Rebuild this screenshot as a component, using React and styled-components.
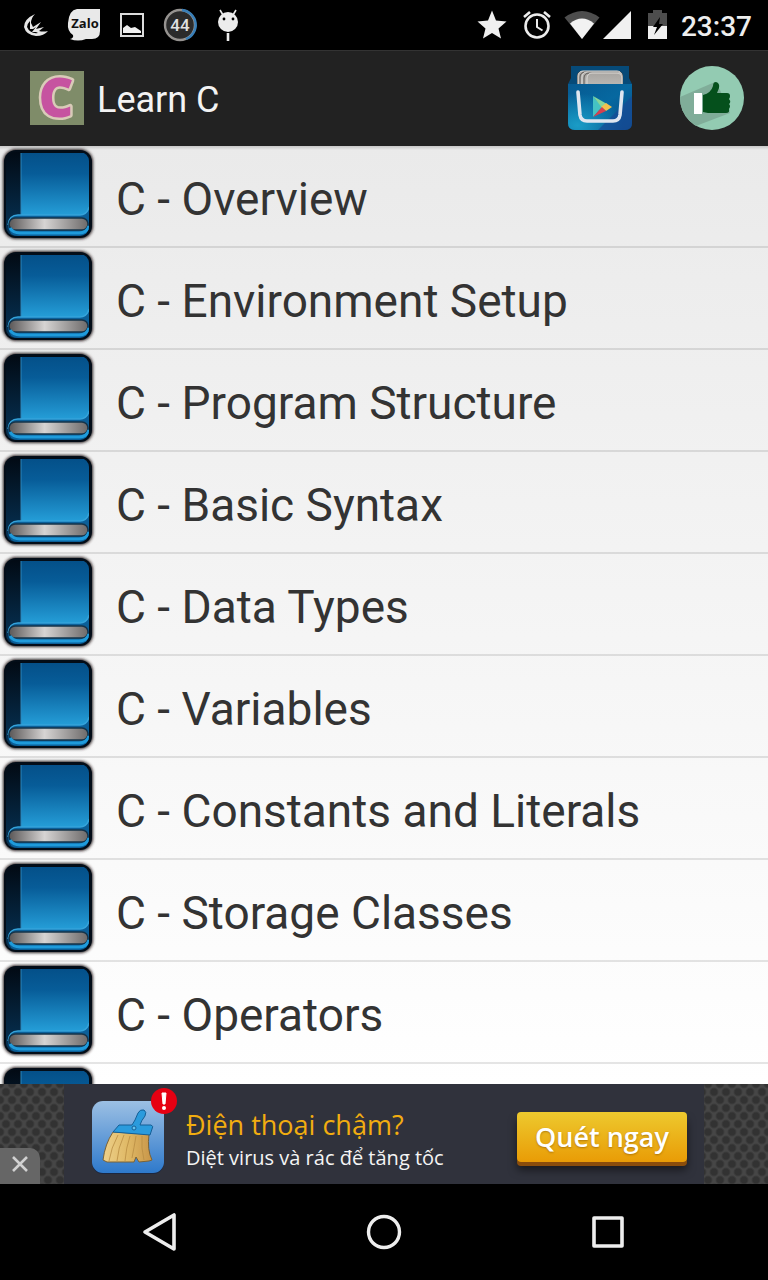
import React from 'react';
import styled, { createGlobalStyle } from 'styled-components';

const chapters = [
  'Overview',
  'Environment Setup',
  'Program Structure',
  'Basic Syntax',
  'Data Types',
  'Variables',
  'Constants and Literals',
  'Storage Classes',
  'Operators',
];

export default function App() {
  return (
    <React.Fragment>
      <GlobalStyle />
      <Screen>
        <StatusBar />
        <AppBar>
          <LogoIcon />
          <Title>Learn C</Title>
          <Action type="button" aria-label="More apps">
            <StoreIcon />
          </Action>
          <Action type="button" aria-label="Rate">
            <ThumbIcon />
          </Action>
        </AppBar>
        <ListArea>
          <BookDefs />
          <List>
            {chapters.map((name) => (
              <Row key={name}>
                <RowLink href="#">
                  <BookIcon />
                  <RowText>C - {name}</RowText>
                </RowLink>
              </Row>
            ))}
            {/* next chapter, only its book peeks out above the banner */}
            <Row>
              <RowLink href="#" aria-label="C - Decision Making">
                <BookIcon />
              </RowLink>
            </Row>
          </List>
        </ListArea>
        <AdBanner />
        <NavBar />
      </Screen>
    </React.Fragment>
  );
}

function StatusBar() {
  return (
    <Status>
      <Notification>
        <svg width="48" height="50" viewBox="0 0 48 50">
          <path
            d="M23 14Q12 19 12 27Q14 35 24 36Q32 36 36 31Q31 32 27 31L32 27L24 29L29 22L21 27L19 23Q19 18 23 14Z"
            fill="#e6e6e6"
          />
          <path d="M18 21L18 29L21 29L24 27L20 32L24 32L26 33Q18 34 15 27Q15 24 18 21Z" fill="#000" />
        </svg>
      </Notification>
      <Notification>
        <svg width="48" height="50" viewBox="0 0 48 50">
          <path
            d="M17 9H40V31Q40 39 32 39H26Q18 42 10 39Q14 38 13 35Q7 31 8 23Q9 10 17 9Z"
            fill="#e9e9e9"
          />
          <text x="25" y="28" textAnchor="middle" fontFamily="Open Sans" fontWeight="700" fontSize="13" fill="#111">
            Zalo
          </text>
        </svg>
      </Notification>
      <Notification>
        <svg width="48" height="50" viewBox="0 0 48 50">
          <rect x="13" y="14" width="22" height="22" fill="none" stroke="#dcdcdc" strokeWidth="2" />
          <path d="M15 33V28L19 25L23 28L27 27L33 31V33Z" fill="#f0f0f0" />
        </svg>
      </Notification>
      <Notification>
        <svg width="48" height="50" viewBox="0 0 48 50">
          <circle cx="24" cy="25" r="15" fill="#2b2b2b" stroke="#969390" strokeWidth="2.400" />
          <path d="M26 10A15 15 0 0 1 30 39" fill="none" stroke="#397fb8" strokeWidth="2.400" />
          <text x="24" y="31" textAnchor="middle" fontFamily="Roboto" fontWeight="500" fontSize="17" fill="#e0e0e0">
            44
          </text>
        </svg>
      </Notification>
      <Notification>
        <svg width="48" height="50" viewBox="0 0 48 50">
          <circle cx="24" cy="22" r="10" fill="#ececec" />
          <path d="M16 10L19 15M32 10L29 15" stroke="#ececec" strokeWidth="1.6" />
          <circle cx="20" cy="19" r="1.4" fill="#000" />
          <circle cx="29" cy="19" r="1.4" fill="#000" />
          <path d="M24 33V41" stroke="#ececec" strokeWidth="2.6" />
        </svg>
      </Notification>
      <Tray>
        <svg width="196" height="50" viewBox="0 0 196 50">
          <path
            d="M20 10.5L24 20.5L34.500 21.500L26.500 28.500L29 38.500L20 33L11 38.500L13.500 28.500L5.500 21.500L16 20.500Z"
            fill="#f0f0f0"
          />
          <circle cx="65" cy="26" r="11.500" fill="none" stroke="#ececec" strokeWidth="2.600" />
          <path d="M65 19V27L70.500 30.500" fill="none" stroke="#ececec" strokeWidth="2" />
          <path d="M52 17L58 12M78 17L72 12" stroke="#ececec" strokeWidth="2.600" />
          <path d="M92.500 17.500Q110 4.500 127.500 17.500L110 39Z" fill="#4d4d4d" />
          <path d="M98 23.500Q110 13.500 122 23.500L110 39Z" fill="#f2f2f2" />
          <path d="M159 11V39H131Z" fill="#f0f0f0" />
          <path d="M176 13H181V10H190V13H195V27H176Z" fill="#4d4d4d" />
          <path d="M176 26H195V39H176Z" fill="#f0f0f0" />
          <path d="M188 17L181 27H185L182 35L191 24H187Z" fill="#000" />
        </svg>
        <Clock>23:37</Clock>
      </Tray>
    </Status>
  );
}

function LogoIcon() {
  return (
    <svg width="54" height="54" viewBox="0 0 54 54" overflow="visible" aria-hidden="true">
      <rect width="54" height="54" fill="#7f8c69" />
      <text
        x="26"
        y="46"
        textAnchor="middle"
        fontFamily="Open Sans"
        fontWeight="800"
        fontSize="54"
        stroke="#d9cbb8"
        strokeWidth="5"
        strokeLinejoin="round"
        fill="#c653a0"
        paintOrder="stroke"
      >
        C
      </text>
    </svg>
  );
}

function StoreIcon() {
  return (
    <svg width="64" height="64" viewBox="0 0 64 64" aria-hidden="true">
      <defs>
        <linearGradient id="bag" x1="0" y1="0" x2="1" y2="1">
          <stop offset="0" stopColor="#075a91" />
          <stop offset="0.5" stopColor="#0668a0" />
          <stop offset="1" stopColor="#0b4a86" />
        </linearGradient>
        <radialGradient id="glow" cx="0.15" cy="0.9" r="0.7">
          <stop offset="0" stopColor="#1a9cc6" />
          <stop offset="1" stopColor="#1a9cc6" stopOpacity="0" />
        </radialGradient>
        <linearGradient id="cards" x1="0" y1="0" x2="0" y2="1">
          <stop offset="0" stopColor="#a9a6a2" />
          <stop offset="1" stopColor="#c4c2be" />
        </linearGradient>
      </defs>
      <path d="M3 0H61V12L64 18H0L3 12Z" fill="#064a78" />
      <rect x="9" y="5" width="46" height="20" rx="5" fill="#4b4744" />
      <g fill="url(#cards)" stroke="#dddbd8" strokeWidth="1">
        <rect x="10" y="5" width="44" height="20" rx="5" />
        <rect x="12" y="6" width="42" height="20" rx="5" stroke="#5c5856" />
        <rect x="14" y="6" width="40" height="20" rx="5" />
        <rect x="16" y="7" width="38" height="20" rx="5" stroke="#5c5856" />
        <rect x="19" y="7" width="35" height="20" rx="5" />
      </g>
      <path d="M0 18H64V57Q64 64 57 64H7Q0 64 0 57Z" fill="url(#bag)" />
      <path d="M0 18H64V57Q64 64 57 64H7Q0 64 0 57Z" fill="url(#glow)" />
      <path d="M64 30L30 64H57Q64 64 64 57Z" fill="#174a96" opacity="0.7" />
      <path
        d="M10 26L12 49Q13 55 19 55H45Q51 55 52 49L54 26"
        fill="none"
        stroke="#dfe6f0"
        strokeWidth="3.600"
        strokeLinecap="round"
      />
      <path d="M25 30L34 41L25 51Z" fill="#45c3c3" />
      <path d="M25 30L39 38L34 42Z" fill="#86d69a" />
      <path d="M38 37L44 41L38 45L33 41Z" fill="#f2c14e" />
      <path d="M25 51L34 41L38 45Z" fill="#d6404f" />
    </svg>
  );
}

function ThumbIcon() {
  return (
    <svg width="64" height="64" viewBox="0 0 64 64" aria-hidden="true">
      <clipPath id="disc">
        <circle cx="32" cy="32" r="32" />
      </clipPath>
      <circle cx="32" cy="32" r="32" fill="#93cbb2" />
      <g clipPath="url(#disc)">
        <path d="M35 16L0 31V66L50 47L40 24Z" fill="#80ad99" />
      </g>
      <rect x="14" y="27" width="8" height="21" fill="#fff" />
      <path
        d="M23 29Q31 27 33 20Q33 16 36 16Q40 17 39 22L37 27H47Q50 27 50 30Q50 32 49 33Q51 35 50 37L49 38Q51 40 49 43Q50 47 46 47H28L23 46Z"
        fill="#05501c"
      />
    </svg>
  );
}

// Gradients shared by every book in the list
function BookDefs() {
  return (
    <Hidden width="0" height="0" aria-hidden="true">
      <defs>
        <linearGradient id="cover" x1="0" y1="0" x2="0" y2="1">
          <stop offset="0" stopColor="#045089" />
          <stop offset="0.3" stopColor="#075c98" />
          <stop offset="0.9" stopColor="#249cd6" />
        </linearGradient>
        <linearGradient id="spine" x1="0" y1="0" x2="0" y2="1">
          <stop offset="0" stopColor="#020a14" />
          <stop offset="1" stopColor="#063458" />
        </linearGradient>
        <linearGradient id="pages" x1="0" y1="0" x2="1" y2="0">
          <stop offset="0" stopColor="#5a5757" />
          <stop offset="0.45" stopColor="#d6d4d3" />
          <stop offset="1" stopColor="#6d6a6a" />
        </linearGradient>
        <filter id="soft" x="-10%" y="-10%" width="120%" height="120%">
          <feGaussianBlur stdDeviation="1.5" />
        </filter>
        <clipPath id="body">
          <rect x="6" y="6" width="83" height="84" rx="9" />
        </clipPath>
      </defs>
    </Hidden>
  );
}

function BookIcon() {
  return (
    <svg width="96" height="100" viewBox="0 0 96 100" aria-hidden="true">
      <rect x="3" y="3" width="90" height="90" rx="13" fill="#2a2021" filter="url(#soft)" />
      <rect x="4" y="4" width="88" height="88" rx="12" fill="#030d18" />
      <g clipPath="url(#body)">
        <rect x="6" y="6" width="16" height="84" fill="url(#spine)" />
        <rect x="21" y="7" width="68" height="68" fill="url(#cover)" />
        <path d="M21 7V70" stroke="#2d86bb" strokeWidth="1" />
        <path d="M8 80Q9 69 18 69H80Q88 69 90 60V90H18Q9 90 8 80Z" fill="#0b5f98" />
        <path d="M8 79Q9 69 18 69H80Q87 69 89 61" fill="none" stroke="#35a3da" strokeWidth="1.300" />
        <rect x="9" y="72" width="79" height="12" rx="6" fill="url(#pages)" stroke="#16344a" strokeWidth="1.500" />
        <path d="M10 82Q13 87 20 87H79Q87 87 89 80" fill="none" stroke="#1f9bdb" strokeWidth="3" />
      </g>
    </svg>
  );
}

function AdBanner() {
  return (
    <Ad>
      <AdBody>
        <CleanerIcon />
        <AdCopy>
          <AdHeadline>Điện thoại chậm?</AdHeadline>
          <AdLine>Diệt virus và rác để tăng tốc</AdLine>
        </AdCopy>
        <ScanButton type="button">Quét ngay</ScanButton>
      </AdBody>
      <CloseButton type="button" aria-label="Close ad">
        <svg width="18" height="18" viewBox="0 0 18 18">
          <path d="M2 2L16 16M16 2L2 16" stroke="#d0d0d0" strokeWidth="2.600" />
        </svg>
      </CloseButton>
    </Ad>
  );
}

function CleanerIcon() {
  return (
    <svg width="90" height="100" viewBox="0 0 90 100" aria-hidden="true">
      <defs>
        <linearGradient id="tile" x1="0" y1="0" x2="0" y2="1">
          <stop offset="0" stopColor="#9cc0e4" />
          <stop offset="1" stopColor="#2e79cb" />
        </linearGradient>
        <linearGradient id="straw" x1="0" y1="0" x2="1" y2="0">
          <stop offset="0" stopColor="#edd08a" />
          <stop offset="0.5" stopColor="#e0b966" />
          <stop offset="1" stopColor="#c89548" />
        </linearGradient>
      </defs>
      <rect x="4" y="18" width="72" height="72" rx="11" fill="#1b2740" />
      <rect x="4" y="17" width="72" height="72" rx="11" fill="url(#tile)" />
      <path
        d="M25 48Q17 60 15 76L19 78H46L48 73L51 78L61 77L64 76Q59 66 61 50Z"
        fill="url(#straw)"
        stroke="#7a6236"
        strokeWidth="1"
      />
      <path
        d="M30 51Q23 64 21 77M36 51Q30 64 29 77M42 52Q38 64 37 77M48 52Q46 64 44 74M54 52Q53 64 56 76"
        fill="none"
        stroke="#b98d42"
        strokeWidth="0.8"
      />
      <path
        d="M44 41Q47 37 50 29Q52 25 56 26Q59 28 57 32Q53 37 52 41H63Q66 42 64 45L62 51L25 48L31 41Z"
        fill="#2a9bdd"
        stroke="#155f96"
        strokeWidth="1"
      />
      <circle cx="46" cy="44" r="2" fill="#64c2ee" stroke="#155f96" strokeWidth="1" />
      <circle cx="76" cy="17" r="13" fill="#e60012" />
      <path d="M74 9H78L77 20H75Z" fill="#fff" stroke="#fff" strokeWidth="1" />
      <circle cx="76" cy="24" r="2" fill="#fff" />
    </svg>
  );
}

function NavBar() {
  return (
    <Nav>
      <NavButton type="button" aria-label="Back">
        <svg width="48" height="48" viewBox="0 0 48 48">
          <path d="M38 7V41L9 24Z" fill="none" stroke="#eee" strokeWidth="3.600" strokeLinejoin="round" />
        </svg>
      </NavButton>
      <NavButton type="button" aria-label="Home">
        <svg width="48" height="48" viewBox="0 0 48 48">
          <circle cx="24" cy="24" r="15.500" fill="none" stroke="#eee" strokeWidth="3.400" />
        </svg>
      </NavButton>
      <NavButton type="button" aria-label="Recent apps">
        <svg width="48" height="48" viewBox="0 0 48 48">
          <rect x="10" y="10" width="28" height="28" fill="none" stroke="#eee" strokeWidth="3.600" strokeLinejoin="round" />
        </svg>
      </NavButton>
    </Nav>
  );
}

const GlobalStyle = createGlobalStyle`
  * {
    box-sizing: border-box;
  }

  body {
    margin: 0;
    background: #000;
    font-family: Roboto, sans-serif;
  }

  button {
    margin: 0;
    padding: 0;
    border: 0;
    background: none;
    font-family: inherit;
  }

  svg {
    display: block;
    flex: none;
  }
`;

const Screen = styled.div`
  display: flex;
  flex-direction: column;
  height: 100vh;
`;

const Status = styled.div`
  display: flex;
  height: 50px;
  padding: 0 16px 0 12px;
  background: #000;
`;

const Notification = styled.span`
  width: 48px;
`;

const Tray = styled.div`
  display: flex;
  align-items: center;
  gap: 13px;
  margin-left: auto;
`;

const Clock = styled.time`
  padding-top: 4px;
  font-size: 28px;
  font-weight: 500;
  line-height: 48px;
  color: #eee;
`;

const AppBar = styled.header`
  display: flex;
  align-items: center;
  height: 96px;
  padding-left: 30px;
  background: #222;
  box-shadow: inset 0 1px 0 #333;
`;

const Title = styled.h1`
  flex: 1;
  margin: 0;
  padding: 4px 0 0 13px;
  font-size: 36px;
  font-weight: 400;
  line-height: 48px;
  color: #f3f3f3;
`;

const Action = styled.button`
  display: flex;
  align-items: center;
  justify-content: center;
  width: 112px;
  height: 96px;
`;

const ListArea = styled.main`
  flex: 1;
  min-height: 0;
  overflow: hidden;
  background: linear-gradient(rgba(0, 0, 0, 0.15), transparent 4px), linear-gradient(#eaeaea, #fff);
`;

const Hidden = styled.svg`
  display: block;
`;

const List = styled.ul`
  margin: 0;
  padding: 0;
  list-style: none;
`;

const Row = styled.li`
  border-bottom: 2px solid rgba(0, 0, 0, 0.1);
`;

const RowLink = styled.a`
  display: flex;
  align-items: center;
  gap: 20px;
  height: 100px;
  color: #333;
  text-decoration: none;
`;

const RowText = styled.span`
  padding-top: 6px;
  font-size: 46px;
  line-height: 54px;
  white-space: nowrap;
`;

const Ad = styled.aside`
  position: relative;
  display: flex;
  justify-content: center;
  height: 100px;
  background-color: #464646;
  background-image: radial-gradient(circle, #323232 3px, transparent 5px),
    radial-gradient(circle, #323232 3px, transparent 5px);
  background-position: 0 0, 6px 8px;
  background-size: 12px 16px;
`;

const AdBody = styled.div`
  display: flex;
  align-items: center;
  width: 640px;
  padding: 0 17px 0 24px;
  background: #30323c;
`;

const AdCopy = styled.div`
  flex: 1;
  padding: 12px 0 0 8px;
  font-family: 'Open Sans', sans-serif;
  white-space: nowrap;
`;

const AdHeadline = styled.p`
  margin: 0;
  font-size: 27px;
  line-height: 36px;
  color: #f2ad10;
`;

const AdLine = styled.p`
  margin: 0;
  font-size: 20px;
  line-height: 30px;
  color: #f4f4f4;
`;

const ScanButton = styled.button`
  width: 170px;
  height: 50px;
  margin-top: 6px;
  border-radius: 4px;
  background: linear-gradient(#edc92e, #e99c06);
  box-shadow: 0 4px 0 #8a4d0c, 0 8px 8px rgba(0, 0, 0, 0.5);
  font-family: 'Open Sans', sans-serif;
  font-size: 27px;
  font-weight: 600;
  line-height: 48px;
  color: #fff;
  text-shadow: 0 1px 2px rgba(120, 70, 0, 0.5);
`;

const CloseButton = styled.button`
  position: absolute;
  bottom: 0;
  left: 0;
  display: flex;
  align-items: center;
  justify-content: center;
  width: 40px;
  height: 36px;
  padding-bottom: 4px;
  border-radius: 0 10px 0 0;
  background: #666;
`;

const Nav = styled.nav`
  display: grid;
  grid-template-columns: repeat(3, 1fr);
  height: 96px;
  padding: 0 48px;
  background: #000;
`;

const NavButton = styled.button`
  display: flex;
  align-items: center;
  justify-content: center;
`;
